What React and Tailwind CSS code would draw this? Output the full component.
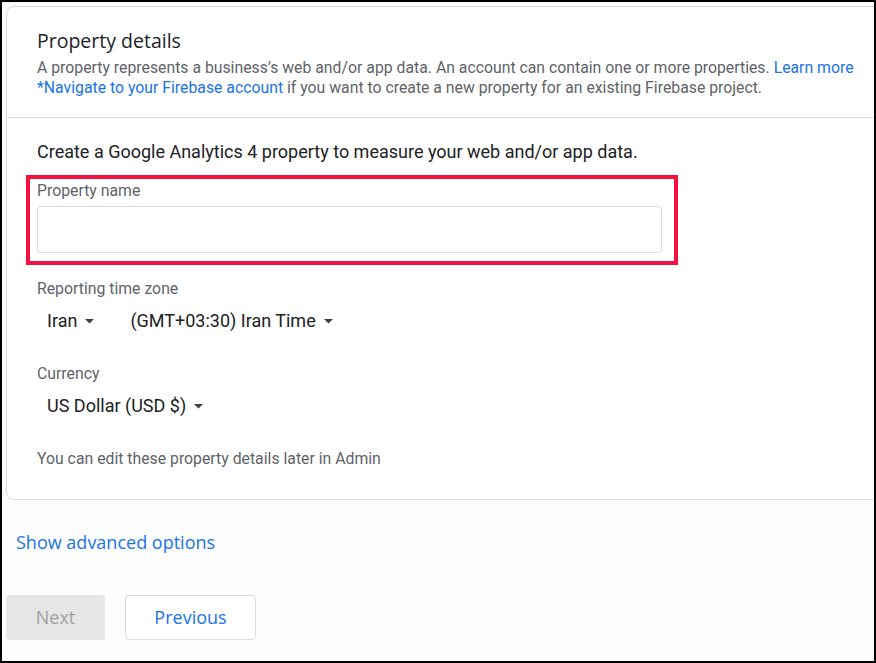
import React from 'react';

function Caret() {
  return (
    <svg width="9" height="5" viewBox="0 0 9 5" className="ml-[8px] mt-[1px]">
      <path d="M0 0 L9 0 L4.5 4.5 Z" fill="#3c4043" />
    </svg>
  );
}

export default function App() {
  return (
    <div
      className="w-[876px] h-[663px] border-2 border-black bg-[#fdfdfd] overflow-hidden text-[#3c4043]"
      style={{ fontFamily: 'Roboto, "Liberation Sans", sans-serif' }}
    >
      <div className="ml-1 mt-1 w-[900px] bg-white border border-[#dadce0] rounded-lg">
        <div className="pl-[30px] pt-[22px] pb-[19px] border-b border-[#dadce0]">
          <h2 className="text-[19.5px] leading-6 text-[#202124]" style={{ fontFamily: '"Open Sans", Roboto, sans-serif' }}>
            Property details
          </h2>
          <p className="text-[15.8px] leading-5 text-[#5f6368] mt-[5px]">
            A property represents a business’s web and/or app data. An account can contain one or more properties.{' '}
            <span className="text-[#1a73e8]">Learn more</span>
            <br />
            <span className="text-[#1a73e8]">*Navigate to your Firebase account</span> if you want to create a new property for an existing Firebase project.
          </p>
        </div>
        <div className="pl-[30px] pt-[22px] pb-[30px]">
          <p className="text-[18px] leading-6 text-[#202124]">
            Create a Google Analytics 4 property to measure your web and/or app data.
          </p>
          <div className="-ml-[11px] mt-[11px] w-[652px] h-[90px] border-4 border-[#f5103f] pl-[7px] pr-[12px] pt-[2px]">
            <div className="text-[15.8px] leading-5 text-[#5f6368]">Property name</div>
            <div className="mt-[5px] h-[47px] border border-[#dadce0] rounded"></div>
          </div>
          <div className="mt-[14px] text-[15.8px] leading-5 text-[#5f6368]">Reporting time zone</div>
          <div className="mt-[10px] flex items-center text-[18px] leading-6 text-[#202124] pl-[10px]">
            <span className="flex items-center">Iran<Caret /></span>
            <span className="flex items-center ml-[36px]">(GMT+03:30) Iran Time<Caret /></span>
          </div>
          <div className="mt-[31px] text-[15.8px] leading-5 text-[#5f6368]">Currency</div>
          <div className="mt-[10px] flex items-center text-[18px] leading-6 text-[#202124] pl-[10px]">
            <span className="flex items-center">US Dollar (USD $)<Caret /></span>
          </div>
          <div className="mt-[31px] text-[15.8px] leading-5 text-[#5f6368]">
            You can edit these property details later in Admin
          </div>
        </div>
      </div>
      <div
        className="pl-[14px] mt-[30px] text-[18px] leading-6 text-[#1a73e8] font-medium"
        style={{ fontFamily: '"Open Sans", Roboto, sans-serif' }}
      >
        Show advanced options
      </div>
      <div className="flex gap-[20px] ml-1 mt-[41px]" style={{ fontFamily: '"Open Sans", Roboto, sans-serif' }}>
        <div className="w-[99px] h-[45px] rounded bg-[#e6e6e6] flex items-center justify-center text-[18px] font-medium text-[#a0a0a0]">
          Next
        </div>
        <div className="w-[131px] h-[45px] rounded border border-[#dadce0] bg-white flex items-center justify-center text-[18px] font-medium text-[#1a73e8]">
          Previous
        </div>
      </div>
    </div>
  );
}
